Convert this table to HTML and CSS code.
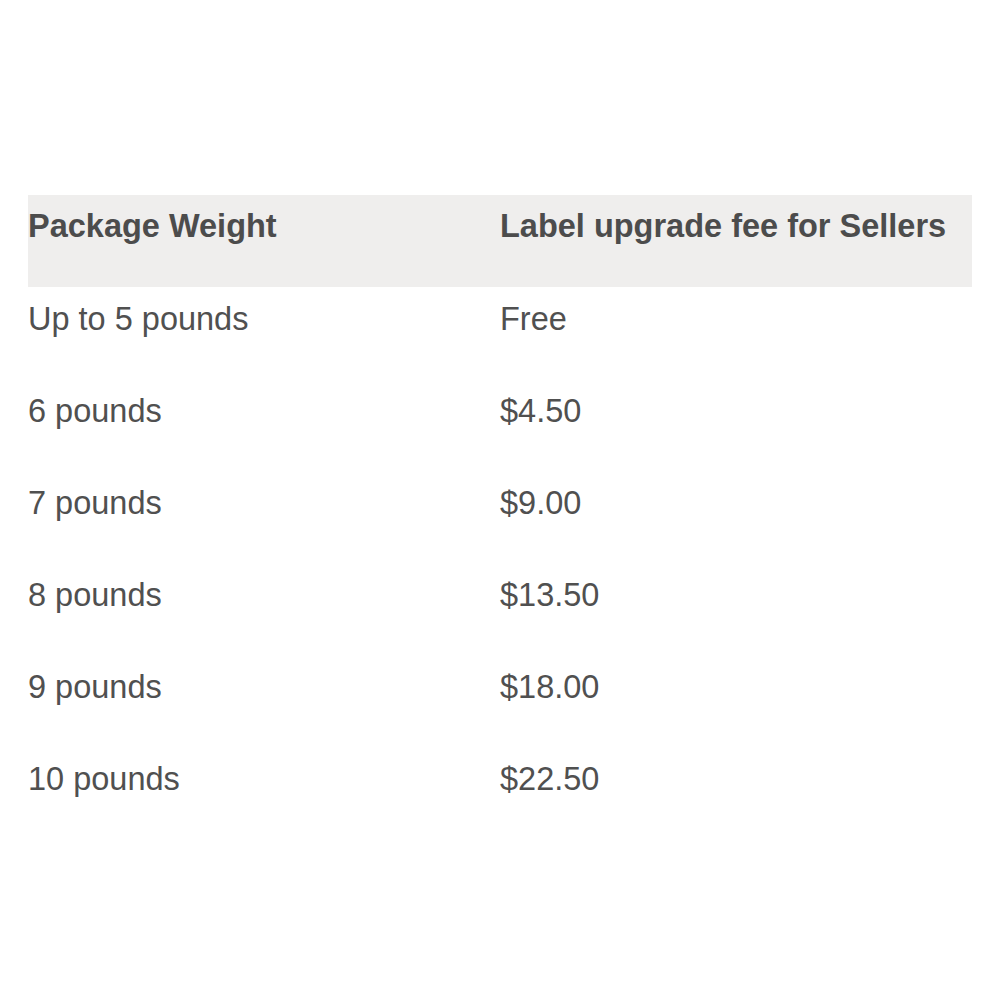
FILE: index.html
```html
<!DOCTYPE html>
<html>
<head>
<meta charset="utf-8">
<link rel="stylesheet" href="styles.css">
</head>
<body>
<div class="page">
  <table class="fees">
    <thead>
      <tr><th>Package Weight</th><th>Label upgrade fee for Sellers</th></tr>
    </thead>
    <tbody>
      <tr><td>Up to 5 pounds</td><td>Free</td></tr>
      <tr><td>6 pounds</td><td>$4.50</td></tr>
      <tr><td>7 pounds</td><td>$9.00</td></tr>
      <tr><td>8 pounds</td><td>$13.50</td></tr>
      <tr><td>9 pounds</td><td>$18.00</td></tr>
      <tr><td>10 pounds</td><td>$22.50</td></tr>
    </tbody>
  </table>
</div>
</body>
</html>
```
FILE: styles.css
```css
html, body {
  margin: 0;
  padding: 0;
  background: #ffffff;
}
.page {
  padding: 195px 28px 0 28px;
  font-family: "Liberation Sans", Arial, sans-serif;
  color: #505050;
}
.fees {
  width: 944px;
  border-collapse: collapse;
  table-layout: fixed;
}
.fees th,
.fees td {
  width: 50%;
  text-align: left;
  vertical-align: top;
  font-size: 32.5px;
  line-height: 40px;
  height: 40px;
}
.fees th {
  font-weight: bold;
  background: #efeeed;
  color: #4c4c4c;
  padding: 11px 0 41px 0;
}
.fees td {
  font-weight: normal;
  padding: 12px 0 40px 0;
}
```
